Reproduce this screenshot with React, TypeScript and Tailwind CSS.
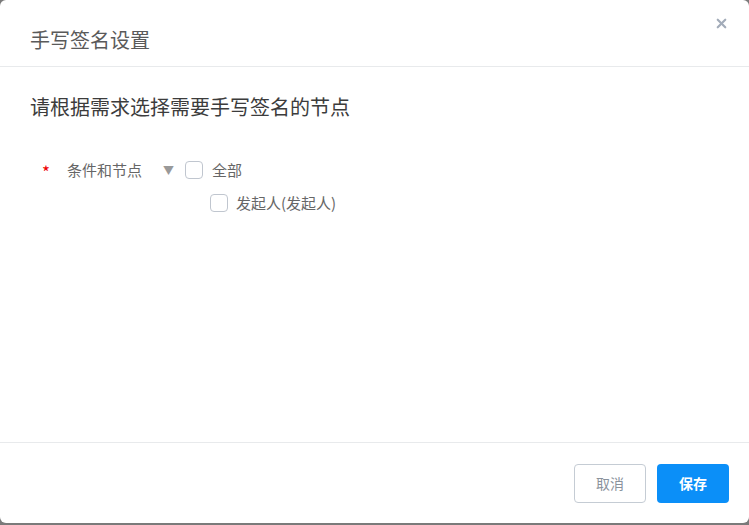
import { X } from "lucide-react";

export default function App() {
  const font = { fontFamily: '"Noto Sans CJK SC", "Noto Sans", sans-serif' };
  return (
    <div className="h-[525px] w-[749px] bg-[#7a7a7a]" style={font}>
      <div className="flex h-[523px] w-full flex-col rounded-md bg-white">
        <div className="relative flex h-[67px] shrink-0 border-b border-[#e8eaec] px-[30px] pt-[26px]">
          <h2 className="text-[20px] leading-[28px] text-[#5a5a5a]">手写签名设置</h2>
          <button className="absolute right-[20px] top-[16px] text-[#a3acb9]">
            <X className="h-[15px] w-[15px]" strokeWidth={3.5} />
          </button>
        </div>

        <div className="flex-1 px-[30px] pt-[26px]">
          <p className="text-[20px] leading-[28px] text-[#3c3c3c]">请根据需求选择需要手写签名的节点</p>

          <div className="mt-[38px] flex items-start">
            <span className="ml-[12px] mt-[2px] w-[25px] text-[17px] leading-[22px] text-[#e00]">*</span>
            <span className="w-[96px] text-[15px] leading-[22px] text-[#666]">条件和节点</span>
            <div className="flex flex-col gap-[11px]">
              <div className="flex items-center">
                <span className="mr-[11px] text-[11px] leading-[22px] text-[#999]">▼</span>
                <span className="h-[18px] w-[18px] rounded-[4px] border border-[#c0c6cf] bg-white" />
                <span className="ml-[9px] text-[15px] leading-[22px] text-[#666]">全部</span>
              </div>
              <div className="ml-[47px] flex items-center">
                <span className="h-[18px] w-[18px] rounded-[4px] border border-[#c0c6cf] bg-white" />
                <span className="ml-[8px] text-[15px] leading-[22px] text-[#666]">发起人(发起人)</span>
              </div>
            </div>
          </div>
        </div>

        <div className="flex h-[81px] shrink-0 justify-end gap-[11px] border-t border-[#e8eaec] pr-[20px] pt-[21px]">
          <button className="h-[39px] w-[72px] rounded-[4px] border border-[#c5ccd4] bg-white text-[14px] text-[#8a929c]">
            取消
          </button>
          <button className="h-[39px] w-[72px] rounded-[4px] bg-[#0b8ff8] text-[14px] font-bold text-white">
            保存
          </button>
        </div>
      </div>
    </div>
  );
}
